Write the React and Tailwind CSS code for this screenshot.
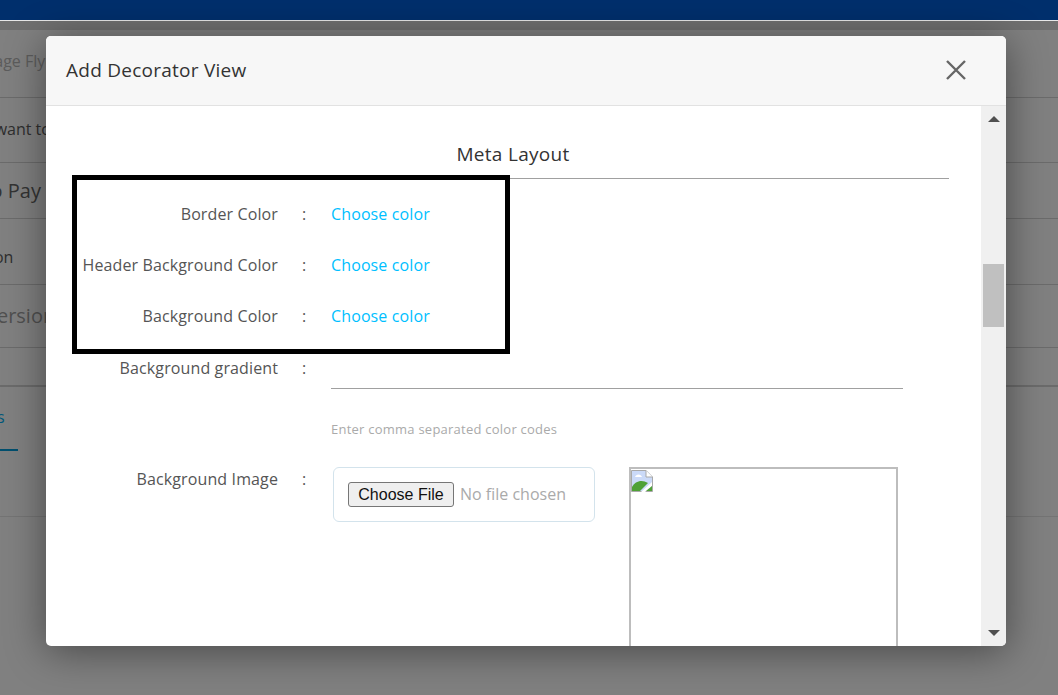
const font = "font-['Open_Sans',sans-serif]"

function BackRow({ className, children }) {
  return <div className={`flex items-center overflow-hidden whitespace-nowrap border-b border-[#6b6b6b] ${className}`}>{children}</div>
}

function PageBehind() {
  return (
    <div className="flex flex-col h-[695px] bg-[#808080] overflow-hidden">
      <div className="h-[21px] shrink-0 bg-[#002f6c] border-b border-[#e8e8e8]" />
      <div className="h-[9px] shrink-0 bg-[#707070]" />
      <BackRow className="h-[68px] text-[16px] text-[#5c5c5c]"><span className="-ml-[25px] -mt-[6px]">Image Flyer</span></BackRow>
      <BackRow className="h-[65px] text-[16px] text-[#2e2e2e]"><span className="-ml-[14px] -mt-[2px]">I want to</span></BackRow>
      <BackRow className="h-[56px] text-[20px] text-[#333333]"><span className="-ml-[24px]">Go Pay</span></BackRow>
      <BackRow className="h-[66px] text-[16px] text-[#2e2e2e]"><span className="-ml-[72px] mt-[10px]">Description</span></BackRow>
      <BackRow className="h-[63px] text-[20px] text-[#505050]"><span className="-ml-[15px]">Version</span></BackRow>
      <div className="h-[39px] shrink-0 border-b-[2px] border-[#6b6b6b]" />
      <div className="h-[130px] shrink-0 border-b border-[#747474] overflow-hidden">
        <div className="w-[18px] h-[64px] border-b-[2px] border-[#004f6e] flex items-center">
          <span className="text-[16px] text-[#00587a] -mt-[2px] -ml-[3px] whitespace-nowrap">s</span>
        </div>
      </div>
    </div>
  )
}

function FieldRow({ label, children }) {
  return (
    <div className="flex items-center h-[24px] text-[16px] leading-[24px] tracking-[0.12px]">
      <div className="w-[199px] text-right text-[#555555] whitespace-nowrap">{label}</div>
      <div className="w-[53px] pl-[24px] text-[#555555]">:</div>
      {children}
    </div>
  )
}

function BrokenImage() {
  return (
    <svg width="22" height="22" viewBox="0 0 22 22" className="block">
      <path d="M0.5 0.5H15L21.5 7V21.5H0.5Z" fill="#cbdaf8" stroke="#a9a9a9" />
      <path d="M15 0.5V7H21.5" fill="#ffffff" stroke="#a9a9a9" />
      <path d="M4 7C5 3.5 10 3.5 11 7Z" fill="#ffffff" />
      <path d="M1 21V17C4 11 11 9 17 13L9 21Z" fill="#4fa136" />
      <path d="M21 12L10 22H14L21 16Z" fill="#ffffff" />
      <path d="M15 21L21 16V21Z" fill="#4fa136" />
    </svg>
  )
}

function Scrollbar() {
  return (
    <div className="w-[25px] shrink-0 bg-[#f0f0f0] flex flex-col items-center">
      <svg width="12" height="6" viewBox="0 0 12 6" className="mt-[10px] block"><path d="M6 0L12 6H0Z" fill="#505050" /></svg>
      <div className="w-[21px] h-[63px] mt-[142px] bg-[#c0c0c0]" />
      <svg width="12" height="6" viewBox="0 0 12 6" className="mt-[303px] block"><path d="M0 0H12L6 6Z" fill="#505050" /></svg>
    </div>
  )
}

function Modal() {
  return (
    <div className="absolute left-[46px] top-[36px] w-[960px] h-[610px] flex flex-col bg-white rounded-[5px] overflow-hidden shadow-[0_5px_40px_rgba(0,0,0,0.45)]">
      <div className="h-[70px] shrink-0 flex items-center justify-between bg-[#f7f7f7] border-b border-[#e2e2e2] pl-[20px] pr-[39px]">
        <h4 className="text-[19px] tracking-[0.25px] font-medium text-[#333333]">Add Decorator View</h4>
        <svg width="22" height="22" viewBox="0 0 22 22" className="block -mt-[2px]">
          <path d="M2 2L20 20M20 2L2 20" stroke="#666666" strokeWidth="2.4" />
        </svg>
      </div>
      <div className="flex flex-1 min-h-0">
        <div className="flex-1 overflow-hidden pl-[33px]">
          <div className="w-[870px] h-[73px] border-b border-[#a0a0a0] flex justify-center pt-[35px]">
            <span className="text-[19px] tracking-[0.3px] leading-[26px] font-medium text-[#333333] -ml-[2px]">Meta Layout</span>
          </div>
          <div className="flex flex-col gap-[27px] mt-[23px]">
            <FieldRow label="Border Color"><span className="text-[#00bfff]">Choose color</span></FieldRow>
            <FieldRow label="Header Background Color"><span className="text-[#00bfff]">Choose color</span></FieldRow>
            <FieldRow label="Background Color"><span className="text-[#00bfff]">Choose color</span></FieldRow>
          </div>
          <div className="mt-[28px]">
            <FieldRow label="Background gradient" />
          </div>
          <div className="ml-[252px] mt-[8px] w-[572px] border-b border-[#a0a0a0]" />
          <p className="ml-[252px] mt-[31px] text-[13px] leading-[18px] tracking-[0.24px] text-[#aaaaaa]">Enter comma separated color codes</p>
          <div className="flex items-start mt-[29px]">
            <div className="w-[254px] shrink-0"><FieldRow label="Background Image" /></div>
            <div className="w-[262px] h-[55px] shrink-0 border border-[#d3e3ec] rounded-[6px] flex items-center pl-[14px]">
              <button className="h-[25px] w-[106px] rounded-[3px] border border-[#767676] bg-[#efefef] font-['Liberation_Sans',sans-serif] text-[16px] text-[#111111]">Choose File</button>
              <span className="ml-[6px] -mt-[1px] text-[16px] text-[#aaaaaa]">No file chosen</span>
            </div>
            <div className="ml-[34px] w-[269px] h-[220px] shrink-0 border-2 border-[#bdbdbd] pt-[1px]">
              <BrokenImage />
            </div>
          </div>
        </div>
        <Scrollbar />
      </div>
    </div>
  )
}

export default function App() {
  return (
    <div className={`relative w-[1058px] h-[695px] overflow-hidden ${font}`}>
      <PageBehind />
      <Modal />
      {/* annotation box drawn over the screenshot */}
      <div className="absolute left-[72px] top-[175px] w-[438px] h-[179px] border-[5px] border-black" />
    </div>
  )
}
